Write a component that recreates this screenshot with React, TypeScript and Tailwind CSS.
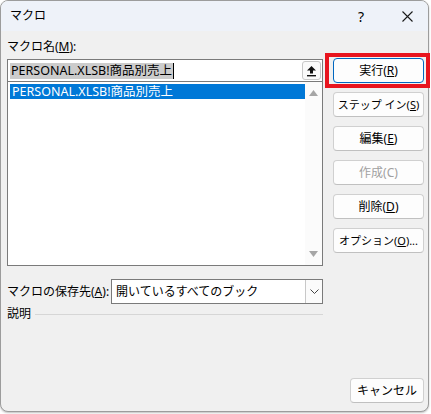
import React from 'react';

const font = { fontFamily: "'Noto Sans', 'Noto Sans CJK JP', sans-serif" };

const Btn: React.FC<{ children: React.ReactNode; focused?: boolean; disabled?: boolean; className?: string }> = ({
  children,
  focused,
  disabled,
  className = 'text-[12px]',
}) => (
  <div
    className={`h-[25px] flex items-center justify-center rounded-[4px] border bg-[#fdfdfd] leading-none ${
      focused ? 'border-[#0067c0]' : 'border-[#d0d0d0] border-b-[#c0c0c0]'
    } ${disabled ? 'text-[#a0a0a0]' : 'text-black'} ${className}`}
  >
    {children}
  </div>
);

export default function App() {
  return (
    <div className="w-[431px] h-[414px] bg-white relative" style={font}>
      <div className="w-[429px] h-[412px] border border-[#9c9c9c] rounded-[8px] overflow-hidden flex flex-col bg-[#f0f0f0] shadow-[0_1px_2px_rgba(0,0,0,0.25)]">
        {/* Title bar */}
        <div className="h-[30px] bg-[#eef2f9] flex items-center pl-[9px] text-[12px] text-black shrink-0">
          <span>マクロ</span>
          <span className="ml-auto mr-[38px] text-[14px]">?</span>
          <svg className="mr-[15px]" width="11" height="11" viewBox="0 0 11 11">
            <path d="M0.5 0.5 L10.5 10.5 M10.5 0.5 L0.5 10.5" stroke="#1a1a1a" strokeWidth="1.1" />
          </svg>
        </div>

        {/* Body */}
        <div className="flex-1 flex">
          {/* Left column */}
          <div className="w-[316px] ml-[6px] flex flex-col text-[12px] text-black">
            <div className="mt-[8px] h-[16px] leading-[16px]">
              マクロ名(<u>M</u>):
            </div>
            <div className="mt-[4px] h-[23px] border border-[#7a7a7a] bg-white flex items-center pl-[2px] pr-[1px]">
              <span className="bg-[#cccccc] h-[16px] leading-[16px] text-[12.5px] px-[1px]">PERSONAL.XLSB!商品別売上</span>
              <span className="w-px h-[16px] bg-black" />
              <div className="ml-auto w-[19px] h-[19px] border border-[#c8c8c8] rounded-[3px] bg-[#fafafa] flex items-center justify-center">
                <svg width="11" height="12" viewBox="0 0 11 12">
                  <path d="M5.5 1 L10 5.5 L7 5.5 L7 8.5 L4 8.5 L4 5.5 L1 5.5 Z" fill="#111" />
                  <rect x="1" y="10" width="9" height="1.4" fill="#111" />
                </svg>
              </div>
            </div>
            <div className="h-[184px] border border-[#7a7a7a] border-t-0 bg-white flex">
              <div className="flex-1 pl-[2px] pt-[2px]">
                <div className="h-[15px] bg-[#0078d7] text-white text-[12.5px] leading-[15px] pl-[2px]">
                  PERSONAL.XLSB!商品別売上
                </div>
              </div>
              <div className="w-[17px] bg-[#fbfbfb] flex flex-col items-center justify-between py-[8px]">
                <svg width="9" height="6" viewBox="0 0 9 6">
                  <path d="M4.5 0 L9 6 L0 6 Z" fill="#a6a6a6" />
                </svg>
                <svg width="9" height="6" viewBox="0 0 9 6">
                  <path d="M0 0 L9 0 L4.5 6 Z" fill="#a6a6a6" />
                </svg>
              </div>
            </div>

            <div className="mt-[13px] flex items-center">
              <span className="w-[104px]">
                マクロの保存先(<u>A</u>):
              </span>
              <div className="flex-1 h-[25px] border border-[#7a7a7a] bg-white flex items-center">
                <span className="pl-[4px]">開いているすべてのブック</span>
                <div className="ml-auto h-full w-[17px] border-l border-[#c8c8c8] bg-[#fbfbfb] flex items-center justify-center">
                  <svg width="9" height="5" viewBox="0 0 9 5">
                    <path d="M0.5 0.5 L4.5 4.5 L8.5 0.5" stroke="#444" strokeWidth="1" fill="none" />
                  </svg>
                </div>
              </div>
            </div>

            <div className="mt-[1px] flex items-center h-[18px]">
              <span>説明</span>
              <div className="flex-1 ml-[4px] h-px bg-[#d6d6d6]" />
            </div>
          </div>

          {/* Right column */}
          <div className="w-[91px] ml-[10px] flex flex-col pt-[27px] pb-[8px] gap-[9px]">
            <Btn focused>
              実行(<u>R</u>)
            </Btn>
            <Btn className="text-[11px]">
              ステップ イン(<u>S</u>)
            </Btn>
            <Btn>
              編集(<u>E</u>)
            </Btn>
            <Btn disabled>作成(C)</Btn>
            <Btn>
              削除(<u>D</u>)
            </Btn>
            <Btn className="text-[11px]">
              オプション(<u>O</u>)...
            </Btn>
            <Btn className="text-[12px] mt-auto ml-auto w-[74px] border-[#b5c3d3]">キャンセル</Btn>
          </div>
        </div>
      </div>

      {/* Red highlight box */}
      <div className="absolute left-[325px] top-[53px] w-[105px] h-[35px] border-4 border-[#e8141e] pointer-events-none" />
    </div>
  );
}
